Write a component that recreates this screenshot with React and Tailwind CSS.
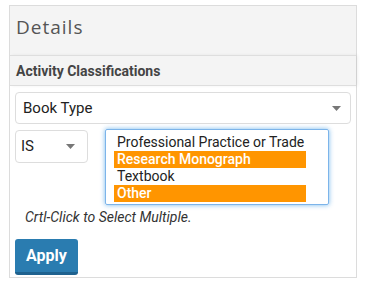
export default function App() {
  const opts = [
    { t: "Professional Practice or Trade", s: false },
    { t: "Research Monograph", s: true },
    { t: "Textbook", s: false },
    { t: "Other", s: true },
  ];
  const Arrow = () => (
    <svg width="9" height="5" viewBox="0 0 9 5" className="block">
      <path d="M0 0 L9 0 L4.5 5 Z" fill="#777" />
    </svg>
  );
  return (
    <div className="w-[368px] h-[286px] bg-white pl-[9px] pt-[5px]" style={{ fontFamily: "Roboto, 'Liberation Sans', sans-serif" }}>
      <div className="w-[348px] h-[273px] border border-[#dcdcdc] bg-white flex flex-col">
        <div className="h-[49px] bg-[#f4f4f4] pl-[6px] pt-[8px] text-[19px] leading-[26px] tracking-[1px] text-[#555]" style={{ fontFamily: "'Open Sans', Lato, sans-serif" }}>
          Details
        </div>
        <div className="h-[31px] bg-[#f4f4f4] border-t border-b border-[#dedede] pl-[6px] pt-[6px] text-[14px] leading-[18px] font-bold text-[#444] shadow-[2px_0_3px_rgba(0,0,0,0.06)]">
          Activity Classifications
        </div>
        <div className="px-[5px] pt-[6px] flex flex-col">
          <div className="w-[336px] h-[32px] border border-[#ddd] rounded-[4px] flex items-center justify-between pl-[7px] pr-[9px] text-[15px] text-[#222]">
            <span>Book Type</span>
            <Arrow />
          </div>
          <div className="flex mt-[5px]">
            <div className="w-[73px] h-[33px] mt-[1px] border border-[#ddd] rounded-[4px] flex items-center justify-between pl-[5px] pr-[12px] text-[15px] text-[#222]">
              <span>IS</span>
              <Arrow />
            </div>
            <div className="ml-[17px] w-[224px] h-[76px] border border-[#7cb4ea] rounded-[2px] shadow-[0_0_5px_rgba(102,175,233,0.9)] pl-[8px] pt-[4px]">
              {opts.map((o) => (
                <div
                  key={o.t}
                  className={
                    "w-[192px] h-[17px] pl-[3px] text-[14px] leading-[17px] " +
                    (o.s ? "bg-[#ff9500] text-white font-medium" : "text-[#222]")
                  }
                >
                  {o.t}
                </div>
              ))}
            </div>
          </div>
          <div className="mt-[3px] pl-[10px] text-[14px] leading-[18px] italic text-[#333]">
            Crtl-Click to Select Multiple.
          </div>
          <div className="mt-[13px] w-[63px] h-[36px] rounded-[3px] bg-[#2a7cb0] border-b-[3px] border-[#1f628f] flex items-center justify-center text-white font-bold text-[16px]">
            Apply
          </div>
        </div>
      </div>
    </div>
  );
}
